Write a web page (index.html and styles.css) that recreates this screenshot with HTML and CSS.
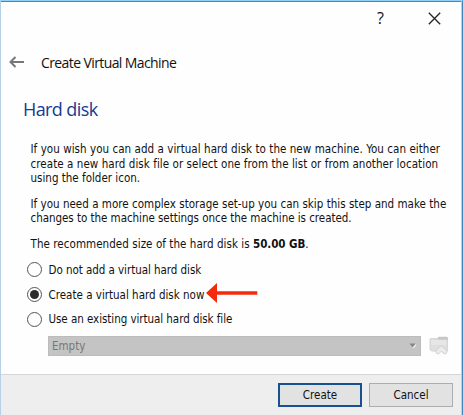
FILE: index.html
```html
<!DOCTYPE html>
<html lang="en">
<head>
<meta charset="utf-8">
<title>Create Virtual Machine</title>
<link rel="stylesheet" href="styles.css">
</head>
<body>
<main class="dialog">
  <div class="titlebar">
    <span class="help">?</span>
    <svg class="close" width="13" height="13" viewBox="0 0 13 13"><path d="M.8.8 12.2 12.2M12.2.8.8 12.2"/></svg>
  </div>
  <header class="header">
    <svg class="back" width="16" height="12" viewBox="0 0 16 12"><path d="M15 6H2M6.5 1 1.5 6l5 5"/></svg>
    <span class="caption">Create Virtual Machine</span>
  </header>
  <h1 class="heading">Hard disk</h1>
  <section class="content">
    <p><span class="l1">If you wish you can add a virtual hard disk to the new machine. You can either</span><span class="l2">create a new hard disk file or select one from the list or from another location</span><span class="l3">using the folder icon.</span></p>
    <p><span class="l4">If you need a more complex storage set-up you can skip this step and make the</span><span class="l5">changes to the machine settings once the machine is created.</span></p>
    <p><span class="l6">The recommended size of the hard disk is <b>50.00 GB</b>.</span></p>
  </section>
  <section class="options">
    <div class="option"><i class="radio"></i><span>Do not add a virtual hard disk</span></div>
    <div class="option"><i class="radio checked"></i><span class="now">Create a virtual hard disk now</span>
      <svg class="pointer" width="52" height="20" viewBox="0 0 52 20"><path d="M0 10 11 0v8.2h40.3v3.6H11V20z"/></svg>
    </div>
    <div class="option"><i class="radio"></i><span>Use an existing virtual hard disk file</span></div>
  </section>
  <div class="picker">
    <div class="combo"><span>Empty</span><svg width="7" height="5" viewBox="0 0 7 5"><path class="shine" d="M3.5 5 7 1v1.5L5 5z"/><path class="tri" d="M.5.5h6L3.5 4.3z"/></svg></div>
    <svg class="folder" width="20" height="19" viewBox="0 0 20 19">
      <path fill="#c6c6c6" d="M8 3 9.5.8H18l1 1V5H8z"/>
      <path fill="#dfdfdf" stroke="#cecece" stroke-width=".8" d="M1 3.2 2 2.5h6l1 1h9.6v11L17 15H2.5L1 13.5z"/>
      <path fill="#e6e6e6" d="M2 4h15v5H2z"/>
      <path fill="#ebebeb" stroke="#c9c9c9" stroke-width=".8" d="m12.3 9.5 6 5.5-1.3 2.7h-2l-2.7-2.4-2.6 2.4h-2L6.5 15z"/>
    </svg>
  </div>
  <footer class="footer">
    <div class="btn primary">Create</div>
    <div class="btn">Cancel</div>
  </footer>
</main>
</body>
</html>
```
FILE: styles.css
```css
* { box-sizing: border-box; }
body { margin: 0; background: #fff; }
.dialog {
  width: 463px; height: 415px; overflow: hidden;
  display: flex; flex-direction: column;
  background: #fefefe; color: #111;
  border-top: 1px solid #93d2f8; border-left: 1px solid #b7d0e9; border-right: 1px solid #3f86bd;
  box-shadow: inset -1px 0 #a5d8f7, inset 0 1px #4b86b3;
  padding: 1px 1px 0 0;
  font-family: "DejaVu Sans Condensed", "DejaVu Sans", sans-serif;
  font-stretch: condensed;
  font-size: 11.5px;
  white-space: nowrap;
}
.titlebar { height: 34px; display: flex; justify-content: flex-end; align-items: center; padding-right: 20px; gap: 43px; }
.help { font: 500 16px/20px "Open Sans", sans-serif; width: 8px; margin-top: -2px; }
.close { margin-top: -1px; }
.close path { stroke: #222; stroke-width: 1.3; fill: none; }
.header { height: 52px; display: flex; align-items: center; padding-left: 8px; gap: 16px; }
.back path { stroke: #777; stroke-width: 2; fill: none; }
.caption { font: 14px/20px "Open Sans", sans-serif; letter-spacing: -.6px; margin-top: 1px; }
.heading { margin: 9px 0 0 22px; font: 400 18px/24px "Open Sans", sans-serif; letter-spacing: -.6px; color: #143a91; }
.content { margin: 21px 0 0 29.5px; line-height: 14.6px; }
.content p { margin: 0 0 11px; }
.content p span { display: table; }
.l1 { letter-spacing: .052px; }
.l2 { letter-spacing: .06px; }
.l4 { letter-spacing: .02px; }
.l5 { letter-spacing: -.04px; }
.l6 { letter-spacing: .06px; }
.l6 b { letter-spacing: -.06px; }
.options { margin: -5px 0 0 25.5px; letter-spacing: -.05px; }
.option { height: 24.7px; display: flex; align-items: center; gap: 7px; }
.now { letter-spacing: 0; }
.radio { width: 15px; height: 15px; border: 1.3px solid #555; border-radius: 50%; display: grid; place-items: center; }
.checked::after { content: ""; width: 9px; height: 9px; border-radius: 50%; background: #2b2b2b; }
.pointer { margin: -3px 0 0 -5px; fill: #f32a0c; }
.picker { display: flex; align-items: center; margin: 4px 0 0 47px; gap: 8px; }
.combo { width: 373px; height: 20px; background: #c4c4c4; border: 1px solid #bcbcbc; padding: 0 4px 0 3px; display: flex; align-items: center; justify-content: space-between; color: #777; }
.tri { fill: #858585; }
.shine { fill: #f2f2f2; }
.footer { margin-top: auto; height: 41px; flex: none; background: #eee; border-top: 1px solid #d6d6d6; display: flex; justify-content: flex-end; padding: 8px 8px 0 0; gap: 7px; }
.btn { width: 84px; height: 24px; border: 1px solid #adadad; background: #e2e2e2; text-align: center; line-height: 23px; }
.primary { border: 2px solid #17528f; line-height: 21px; }
```
